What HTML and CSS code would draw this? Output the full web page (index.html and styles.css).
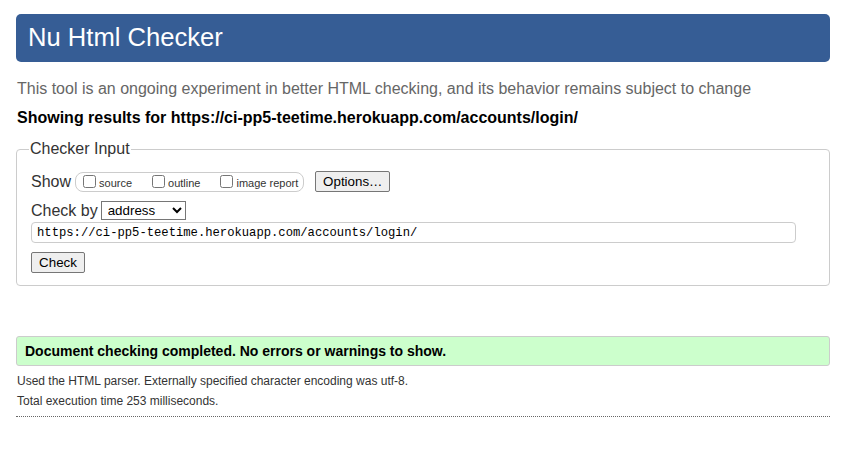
FILE: index.html
```html
<!DOCTYPE html>
<html lang="en">
<head>
<meta charset="utf-8">
<title>Nu Html Checker</title>
<link rel="stylesheet" href="styles.css">
</head>
<body>
<h1 class="title">Nu Html Checker</h1>
<p class="intro">This tool is an ongoing experiment in better HTML checking, and its behavior remains subject to change</p>
<p class="results-for">Showing results for https://ci-pp5-teetime.herokuapp.com/accounts/login/</p>
<form class="checker">
  <fieldset class="checker-input">
    <legend class="legend">Checker Input</legend>
    <div class="row row-show">
      <span class="label">Show</span>
      <span class="show-group">
        <label class="opt"><input type="checkbox" class="cb"><span class="opt-text">source</span></label>
        <label class="opt"><input type="checkbox" class="cb"><span class="opt-text">outline</span></label>
        <label class="opt"><input type="checkbox" class="cb"><span class="opt-text">image report</span></label>
      </span>
      <button type="button" class="btn btn-options">Options…</button>
    </div>
    <div class="row row-by">
      <span class="label">Check by</span>
      <select class="select"><option>address</option></select>
    </div>
    <div class="row row-url">
      <input class="url" type="text" value="https://ci-pp5-teetime.herokuapp.com/accounts/login/">
    </div>
    <div class="row row-submit">
      <button type="button" class="btn btn-check">Check</button>
    </div>
  </fieldset>
</form>
<p class="success">Document checking completed. No errors or warnings to show.</p>
<p class="details details-first">Used the HTML parser. Externally specified character encoding was utf-8.</p>
<p class="details">Total execution time 253 milliseconds.</p>
<hr class="dotted">
</body>
</html>
```

FILE: styles.css
```css
html, body {
  background: #fff;
}
body {
  margin: 0 24px 0 16px;
  font-family: "Liberation Sans", Arial, sans-serif;
  color: #000;
}
.title {
  margin: 14px 0 0;
  height: 48px;
  box-sizing: border-box;
  padding: 8px 12px 0;
  background: #365d95;
  color: #fff;
  font-weight: normal;
  font-size: 25.6px;
  line-height: 30px;
  border-radius: 5px;
}
.intro {
  margin: 17px 0 0 1px;
  color: #666;
  font-size: 16px;
  line-height: 20px;
}
.results-for {
  margin: 9px 0 0 1px;
  font-weight: bold;
  font-size: 16px;
  line-height: 20px;
}
.checker {
  margin: 12px 0 0;
}
.checker-input {
  margin: 0;
  padding: 0 14px 12px 14px;
  border: 1px solid #ccc;
  border-radius: 4px;
}
.legend {
  padding: 0 1px;
  margin-left: -2px;
  font-size: 16px;
  line-height: 18px;
  color: #333;
}
.row {
  display: flex;
  align-items: center;
}
.row-show {
  height: 21px;
  margin-top: 13px;
}
.row-by {
  height: 19px;
  margin-top: 9px;
}
.row-url {
  height: 21px;
  margin-top: 2px;
}
.row-submit {
  height: 21px;
  margin-top: 9px;
}
.label {
  font-size: 16px;
  color: #333;
  margin-right: 4px;
}
.show-group {
  display: inline-flex;
  align-items: center;
  height: 18px;
  padding: 0 5px 0 4px;
  border: 1px solid #ccc;
  border-radius: 8px;
}
.opt {
  display: inline-flex;
  align-items: center;
  font-size: 11px;
  color: #333;
  margin-right: 17px;
}
.opt:last-child {
  margin-right: 0;
}
.opt-text {
  padding-top: 3px;
}
.cb {
  margin: 0 3px 0 3px;
  width: 13px;
  height: 13px;
}
.btn {
  font-family: "Liberation Sans", Arial, sans-serif;
  font-size: 13.33px;
  background: #efefef;
  border: 1px solid #767676;
  border-radius: 2px;
  color: #000;
  padding: 1px 6px;
  height: 21px;
}
.btn-options {
  margin-left: 11px;
  width: 75px;
}
.btn-check {
  width: 54px;
}
.select {
  font-family: "Liberation Sans", Arial, sans-serif;
  font-size: 13.33px;
  width: 85px;
  height: 19px;
  border: 1px solid #767676;
  border-radius: 0;
  background: #fff;
  color: #000;
  padding: 0 0 0 2px;
  margin-left: -1px;
}
.url {
  width: 765px;
  height: 21px;
  box-sizing: border-box;
  border: 1px solid #ccc;
  border-radius: 4px;
  padding: 0 5px;
  font-family: "Liberation Mono", "Courier New", monospace;
  font-size: 12.2px;
  color: #000;
}
.success {
  margin: 50px 0 0;
  height: 30px;
  box-sizing: border-box;
  padding: 0 8px;
  background: #ccffcc;
  border: 1px solid #ccc;
  border-radius: 3px;
  font-weight: bold;
  font-size: 14px;
  line-height: 28px;
}
.details {
  margin: 6px 0 0 1px;
  font-size: 12px;
  line-height: 14px;
  color: #333;
}
.details-first {
  margin-top: 8px;
}
.dotted {
  margin: 8px 0 0;
  border: 0;
  border-top: 1px dotted #666;
  height: 0;
}
```
